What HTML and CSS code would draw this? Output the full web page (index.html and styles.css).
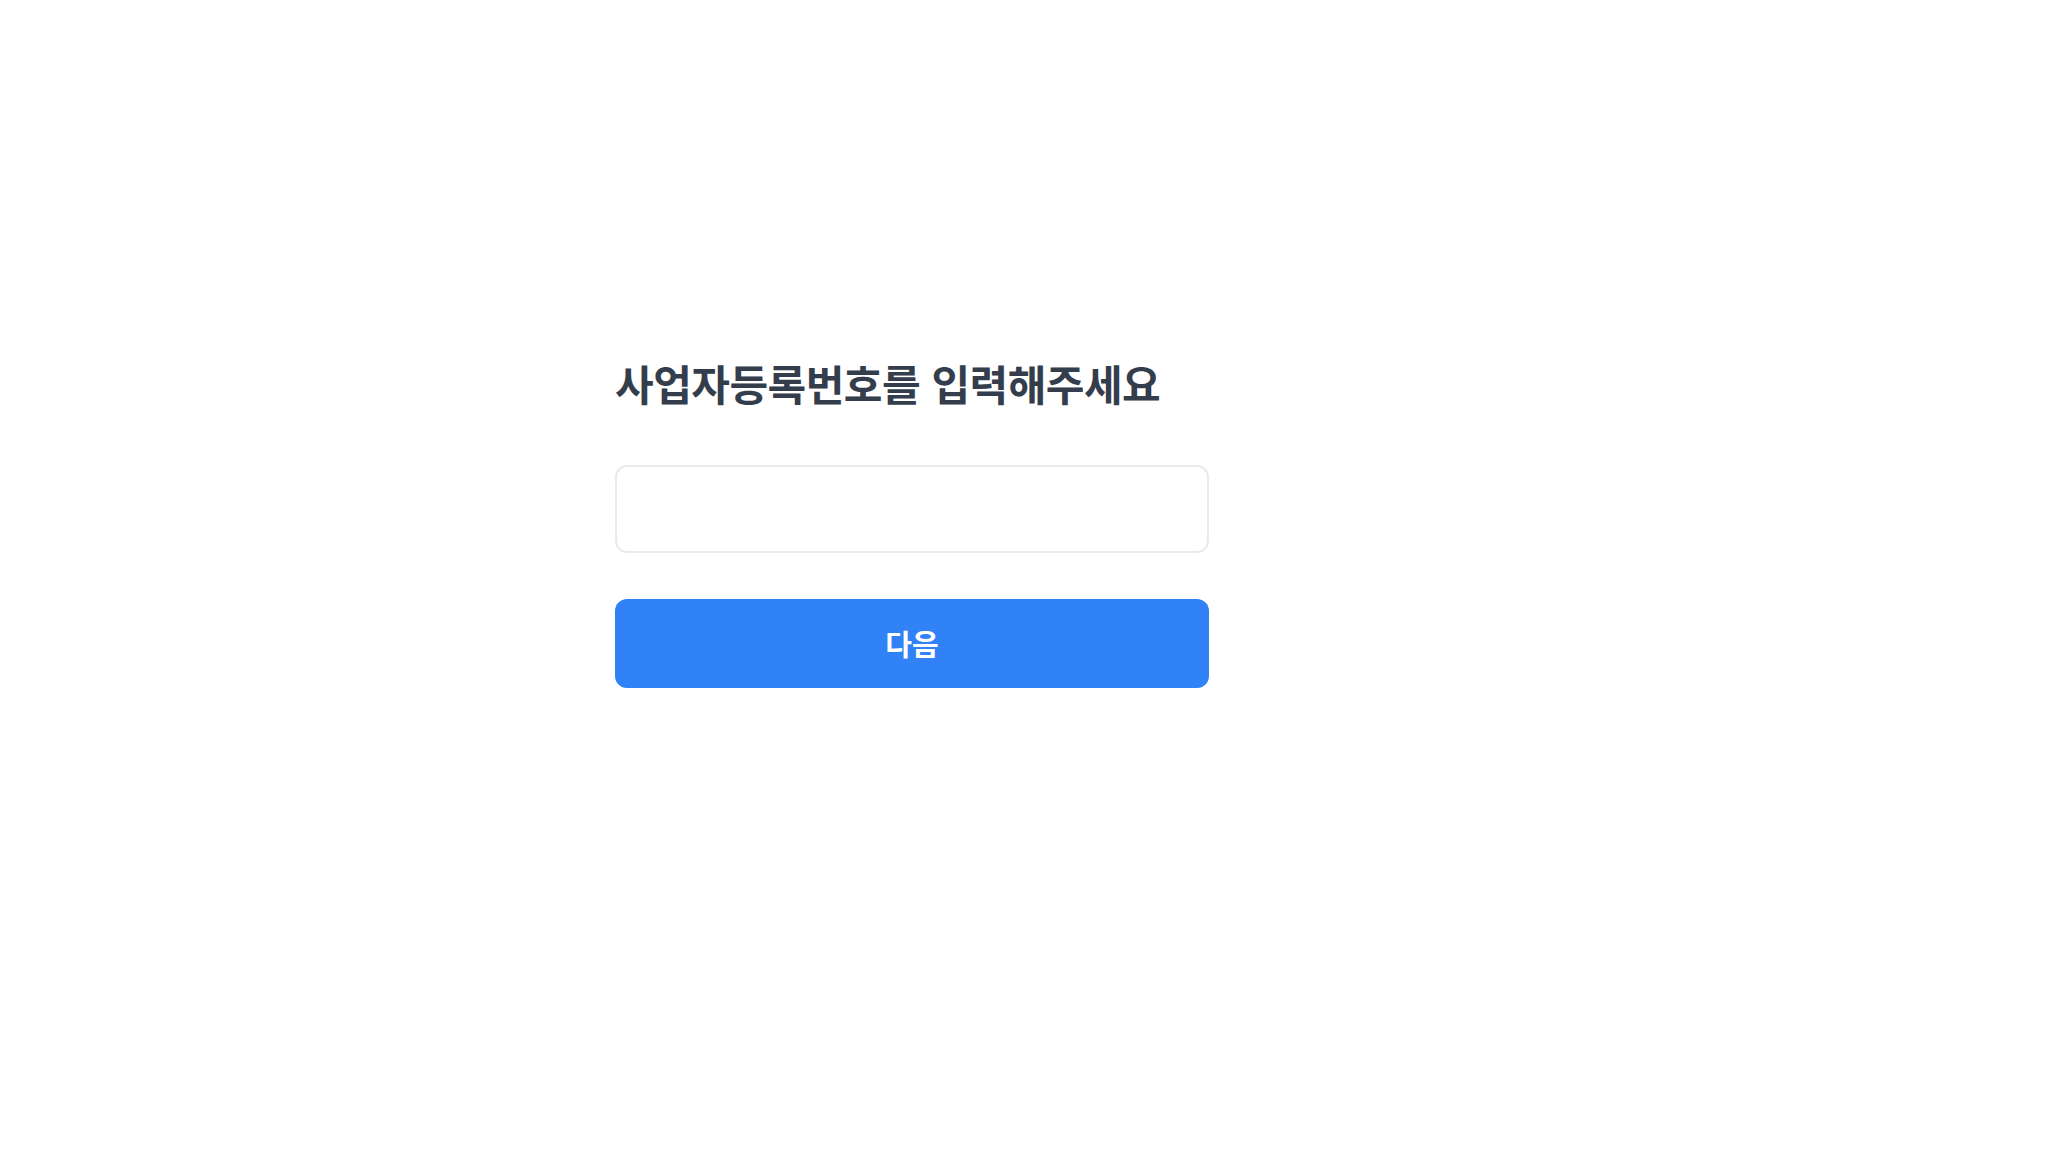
FILE: index.html
```html
<!DOCTYPE html>
<html lang="ko">
<head>
    <meta charset="UTF-8">
    <meta name="viewport" content="width=device-width, initial-scale=1.0">
    <title>사업자등록번호 입력</title>
    <link rel="stylesheet" href="styles.css">
</head>
<body>

    <div class="page">
        <form class="biz-form" onsubmit="return false;">
            <h1 class="biz-title">사업자등록번호를 입력해주세요</h1>
            <input type="text" class="biz-input" inputmode="numeric">
            <button type="submit" class="btn">다음</button>
        </form>
    </div>

</body>
</html>
```

FILE: styles.css
```css
* {
    margin: 0;
    padding: 0;
    box-sizing: border-box;
}

body {
    font-family: "Noto Sans CJK KR", "Noto Sans", sans-serif;
    background: #fff;
    color: #333d4b;
}

.page {
    padding: 356px 0 0 615px;
}

.biz-form {
    width: 594px;
    display: flex;
    flex-direction: column;
}

.biz-title {
    font-size: 42px;
    line-height: 54px;
    font-weight: 700;
    letter-spacing: -0.5px;
    color: #333d4b;
    margin-bottom: 55px;
}

.biz-input {
    height: 88px;
    border: 2px solid #e8ebee;
    border-radius: 12px;
    padding: 0 22px;
    font-family: inherit;
    font-size: 24px;
    outline: none;
}

.btn {
    margin-top: 46px;
    height: 89px;
    border: none;
    border-radius: 12px;
    background: #3182f6;
    color: #fff;
    font-family: inherit;
    font-size: 29px;
    font-weight: 700;
    padding-bottom: 2px;
    cursor: pointer;
}
```
